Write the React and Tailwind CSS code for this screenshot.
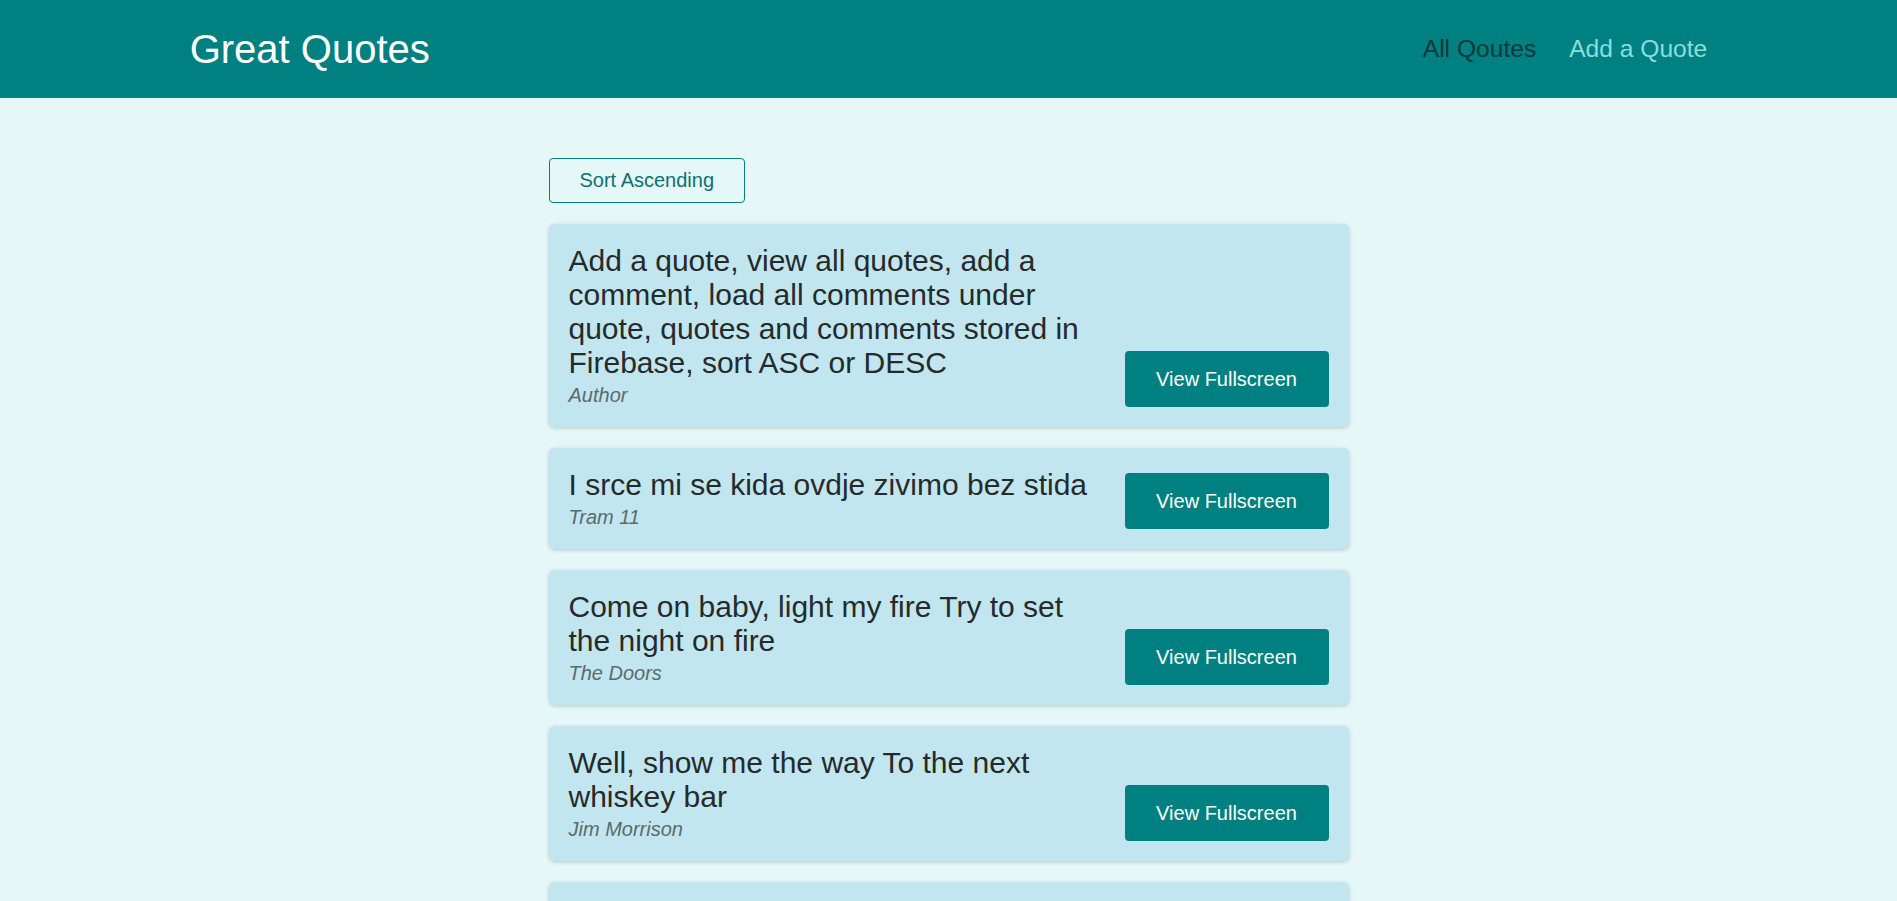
import { useState } from 'react';

const QUOTES = [
  {
    id: 'q1',
    text: 'Add a quote, view all quotes, add a comment, load all comments under quote, quotes and comments stored in Firebase, sort ASC or DESC',
    author: 'Author',
  },
  { id: 'q2', text: 'I srce mi se kida ovdje zivimo bez stida', author: 'Tram 11' },
  { id: 'q3', text: 'Come on baby, light my fire Try to set the night on fire', author: 'The Doors' },
  { id: 'q4', text: 'Well, show me the way To the next whiskey bar', author: 'Jim Morrison' },
  { id: 'q5', text: 'People are strange when you are a stranger', author: 'The Doors' },
];

function QuoteItem({ text, author }) {
  return (
    <li className="flex items-end justify-between rounded-[6px] bg-[#c2e6ef] p-5 shadow-[0_1px_4px_rgba(0,0,0,0.2)]">
      <figure className="w-[530px]">
        <blockquote className="mb-[4px] text-[30px] leading-[34px] text-[#252a2b]">
          <p>{text}</p>
        </blockquote>
        <figcaption className="text-[20px] leading-[23px] italic text-[#5b6a6c]">{author}</figcaption>
      </figure>
      <button className="flex h-[56px] w-[204px] shrink-0 items-center justify-center rounded-[4px] bg-[#008080] text-[20px] text-white">
        View Fullscreen
      </button>
    </li>
  );
}

export default function App() {
  const [ascending, setAscending] = useState(true);

  return (
    <div className="min-h-screen bg-[#e6f7f7] font-['Liberation_Sans',Arial,sans-serif]">
      {/* Header */}
      <header className="flex h-[98px] items-center justify-between bg-[#008080] px-[10%]">
        <div className="text-[40px] text-white">Great Quotes</div>
        <nav>
          <ul className="flex gap-[33px] text-[24.6px]">
            <li>
              <a href="#" className="text-[#0b3a3a]">All Qoutes</a>
            </li>
            <li>
              <a href="#" className="text-[#88dfdf]">Add a Quote</a>
            </li>
          </ul>
        </nav>
      </header>

      {/* Quote list */}
      <main className="mx-auto w-[800px] pt-[60px]">
        <div className="mb-[21px]">
          <button
            onClick={() => setAscending(!ascending)}
            className="rounded-[4px] border border-[#008080] px-[30px] py-[10px] text-[20px] leading-[23px] text-[#0b7272]"
          >
            {ascending ? 'Sort Ascending' : 'Sort Descending'}
          </button>
        </div>
        <ul className="flex flex-col gap-[21px]">
          {QUOTES.map((q) => (
            <QuoteItem key={q.id} text={q.text} author={q.author} />
          ))}
        </ul>
      </main>
    </div>
  );
}
